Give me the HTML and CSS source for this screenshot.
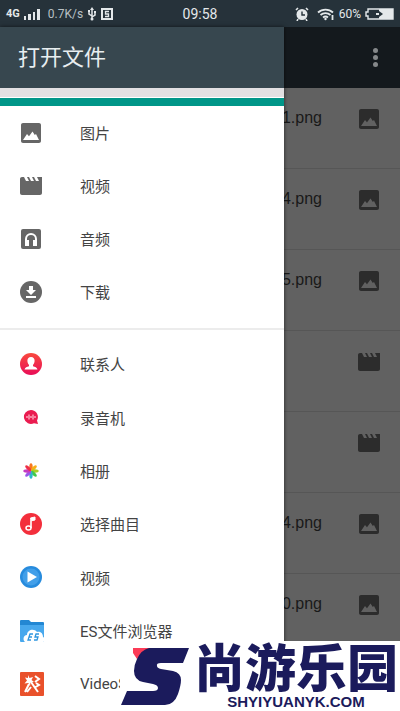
FILE: index.html
```html
<!DOCTYPE html>
<html lang="zh-CN">
<head>
    <meta charset="UTF-8">
    <meta name="viewport" content="width=device-width, initial-scale=1.0">
    <title>打开文件</title>
    <link rel="stylesheet" href="styles.css">
</head>
<body>
    <!-- Shared icons -->
    <svg class="sprite" width="0" height="0" aria-hidden="true">
        <symbol id="image" viewBox="0 0 24 24">
            <path d="M22 20V4c0-1.100-.9-2-2-2H4c-1.100 0-2 .9-2 2v16c0 1.100.9 2 2 2h16c1.100 0 2-.9 2-2zM4 19l4-6 2 2.200 3.500-4.700 2.300 3.500 1.200-1 3 6z"/>
        </symbol>
        <symbol id="movie" viewBox="0 0 24 24">
            <path d="M18 3l2 4h-3l-2-4h-2l2 4h-3l-2-4H8l2 4H7L5 3H3c-1.100 0-2 .9-2 2v14c0 1.100.9 2 2 2h18c1.100 0 2-.9 2-2V3z"/>
        </symbol>
    </svg>

    <header class="status-bar">
        <div class="status-group">
            <span class="network">4G</span>
            <svg width="16" height="12" viewBox="0 0 16 12" fill="currentColor"><path d="M0 8h2v4H0zM4 6h3v6H4zM9 4h2v8H9zM13 1h3v11h-3z"/></svg>
            <span class="speed">0.7K/s</span>
            <svg width="10" height="14" viewBox="0 0 10 14" fill="none" stroke="currentColor" stroke-width="1.500"><path d="M5 2v10M5 9L2 7V4M5 10l3-2V5"/><path d="M5 0l2 3H3zM1 3h2v2H1zM7 4h2v2H7z" fill="currentColor" stroke="none"/><circle cx="5" cy="12" r="1.500" fill="currentColor" stroke="none"/></svg>
            <svg width="12" height="12" viewBox="0 0 12 12" fill="none" stroke="currentColor"><rect x="1" y="1" width="10" height="10" stroke-width="2"/><path d="M8 3.500H4.500V6h3v2.500H4" stroke-width="1.300"/></svg>
        </div>
        <time class="clock">09:58</time>
        <div class="status-group status-right">
            <svg width="14" height="14" viewBox="0 0 14 14"><circle cx="7" cy="7.500" r="5.500" fill="currentColor"/><path d="M1 3l2-2M13 3l-2-2M3 12l-1 2M11 12l1 2" stroke="currentColor" stroke-width="1.600"/><path d="M7 4.500v3.500h3" fill="none" stroke="#26323a" stroke-width="1.400"/></svg>
            <svg class="wifi" width="18" height="14" viewBox="0 0 18 14" fill="none" stroke="currentColor" stroke-width="1.800"><path d="M1 5.500a11 11 0 0 1 15 0M3.500 8a7.500 7.500 0 0 1 10 0M6 10.500a4 4 0 0 1 5 0"/><circle cx="8.500" cy="12" r="1.200" fill="currentColor" stroke="none"/><path d="M15.500 8v5"/></svg>
            <span class="percent">60%</span>
            <svg width="29" height="12" viewBox="0 0 29 12"><path d="M3 1h25v10H3V8H1V4h2z" fill="none" stroke="currentColor" stroke-width="1.400"/><path d="M14 1h14v10H14z" fill="currentColor"/><path d="M11 6h3" stroke="currentColor" stroke-width="2"/><path d="M14 3l4 3-4 3z" fill="#26323a"/></svg>
        </div>
    </header>

    <div class="app">
        <main class="page">
            <div class="toolbar">
                <button class="more" type="button" aria-label="更多"><i></i><i></i><i></i></button>
            </div>
            <ul class="files">
                <li><span>1.png</span><svg class="icon"><use href="#image"/></svg></li>
                <li><span>4.png</span><svg class="icon"><use href="#image"/></svg></li>
                <li><span>5.png</span><svg class="icon"><use href="#image"/></svg></li>
                <li><svg class="icon"><use href="#movie"/></svg></li>
                <li><svg class="icon"><use href="#movie"/></svg></li>
                <li><span>4.png</span><svg class="icon"><use href="#image"/></svg></li>
                <li><span>0.png</span><svg class="icon"><use href="#image"/></svg></li>
            </ul>
        </main>

        <nav class="drawer">
            <h1>打开文件</h1>
            <div class="selected"></div>
            <ul class="menu">
                <li><a href="#"><svg class="icon"><use href="#image"/></svg>图片</a></li>
                <li><a href="#"><svg class="icon"><use href="#movie"/></svg>视频</a></li>
                <li><a href="#"><svg class="icon" viewBox="0 0 24 24"><rect x="2" y="2" width="20" height="20" rx="2"/><path d="M7 18v-6a5 5 0 0 1 10 0v6" fill="none" stroke="#fff" stroke-width="2"/><path d="M6 13h4v6H6zM14 13h4v6h-4z" fill="#fff"/></svg>音频</a></li>
                <li><a href="#"><svg class="icon" viewBox="0 0 24 24"><circle cx="12" cy="12" r="11"/><path d="M10 6h4v4h3l-5 5-5-5h3zM7 16h10v2H7z" fill="#fff"/></svg>下载</a></li>
            </ul>
            <ul class="menu apps">
                <li><a href="#"><svg class="icon" viewBox="0 0 24 24"><defs><linearGradient id="red" x2="0" y2="1"><stop stop-color="#f94a3e"/><stop offset="1" stop-color="#e80d58"/></linearGradient></defs><circle cx="12" cy="12" r="11" fill="url(#red)"/><path d="M12 5c-2.500 0-3.800 1.700-3.600 4 .1 2 .8 3 1.600 3.800v1.400c-2 .8-4 1-4.500 3.300h13c-.5-2.300-2.500-2.500-4.500-3.300v-1.400c.8-.8 1.500-1.800 1.600-3.800.2-2.300-1.100-4-3.600-4z" fill="#fff"/></svg>联系人</a></li>
                <li><a href="#"><svg class="icon" viewBox="0 0 24 24"><path d="M12 5a7 7 0 1 0 3 13.300l4 .7-1-3.500A7 7 0 0 0 12 5z" fill="#ea1c50"/><path d="M8 11v2M10 9.500v5M12 11v2M14 9.500v5M16 11v2" stroke="#ffc4d0" stroke-width="1.200"/></svg>录音机</a></li>
                <li><a href="#"><svg class="icon" viewBox="0 0 24 24">
                    <ellipse cx="12" cy="8" rx="1.700" ry="3.700" fill="#f8781f"/>
                    <ellipse cx="12" cy="8" rx="1.700" ry="3.700" fill="#f7ae17" transform="rotate(45 12 12)"/>
                    <ellipse cx="12" cy="8" rx="1.700" ry="3.700" fill="#a9cf24" transform="rotate(90 12 12)"/>
                    <ellipse cx="12" cy="8" rx="1.700" ry="3.700" fill="#42c94b" transform="rotate(135 12 12)"/>
                    <ellipse cx="12" cy="8" rx="1.700" ry="3.700" fill="#2db8ca" transform="rotate(180 12 12)"/>
                    <ellipse cx="12" cy="8" rx="1.700" ry="3.700" fill="#9957e8" transform="rotate(225 12 12)"/>
                    <ellipse cx="12" cy="8" rx="1.700" ry="3.700" fill="#c53ac0" transform="rotate(270 12 12)"/>
                    <ellipse cx="12" cy="8" rx="1.700" ry="3.700" fill="#ee3048" transform="rotate(315 12 12)"/>
                </svg>相册</a></li>
                <li><a href="#"><svg class="icon" viewBox="0 0 24 24"><circle cx="12" cy="12" r="11" fill="#f32f3c"/><path d="M11.500 6l4.500-1v3l-3.500.8" fill="#fff" stroke="#fff"/><ellipse cx="9.500" cy="16" rx="2.500" ry="2" fill="none" stroke="#fff" stroke-width="1.500"/><path d="M12 6v10" stroke="#fff" stroke-width="1.600"/></svg>选择曲目</a></li>
                <li><a href="#"><svg class="icon" viewBox="0 0 24 24"><circle cx="12" cy="12" r="11" fill="#278bdd"/><circle cx="12" cy="12" r="8.500" fill="#429fe9"/><path d="M8.500 6.500l9.500 5.500-9.500 5.500z" fill="#fff"/></svg>视频</a></li>
                <li><a href="#"><svg class="icon app-icon" viewBox="0 0 26 26"><path d="M1 3q0-1 1-1h8l2 2h12q1 0 1 1v4H1z" fill="#2387d3"/><path d="M1 7h24v16q0 1-1 1H2q-1 0-1-1z" fill="#48a8ed"/><path d="M6 24c-3-3-1-7 2-7 0-5 7-7 10-3 4-1 6 2 6 5 3 1 2 5 0 5z" fill="#fff"/><path d="M14 16h-3l-2 6h3M10 19h3M20 16h-3l-1 3h3l-1 3h-3" fill="none" stroke="#2f96df" stroke-width="1.300"/></svg>ES文件浏览器</a></li>
                <li><a href="#"><svg class="icon app-icon" viewBox="0 0 26 26"><rect x="1" y="1" width="24" height="24" rx="1" fill="#e9512b"/><path d="M9 4l1.500 3 3.500-1-1.500 3 2.500 2-3.500.5L11 15l-1.500-3-4 .5 2.500-3-2-3 3 .5z" fill="#fff"/><path d="M12 11l7 10M10 13l-4 8M16 5l4 3-4 3M12 16l-4 5M17 12l3 2-5 3" fill="none" stroke="#fff" stroke-width="2"/></svg>VideoS</a></li>
            </ul>
        </nav>
    </div>

    <footer class="brand">
        <svg class="brand-logo" width="69" height="58" viewBox="0 0 69 58">
            <path d="M12 0h17L16 11l-4-6z" fill="#fb3b57"/>
            <path d="M28 0h40l-6 15H40q-5 0-4 3 0 2 4 3l12 2q8 2 8 9 0 5-3 14-4 11-13 11H0l6-14h26q5 0 5-3 0-3-5-4l-10-2q-9-2-9-11 0-6 3-12 4-9 12-11z" fill="#1b1b5c"/>
        </svg>
        <div class="brand-text">
            <strong>尚游乐园</strong>
            <span>SHYIYUANYK.COM</span>
        </div>
    </footer>
</body>
</html>
```
FILE: styles.css
```css
* {
    box-sizing: border-box;
}

body {
    margin: 0;
    height: 100vh;
    display: flex;
    flex-direction: column;
    position: relative;
    overflow: hidden;
    background: #616161;
    font-family: Roboto, "Noto Sans CJK SC", sans-serif;
    font-size: 15px;
    color: #444;
}

ul {
    list-style: none;
    margin: 0;
    padding: 0;
}

svg {
    flex: none;
    display: block;
}

.sprite {
    position: absolute;
}

.icon {
    width: 24px;
    height: 24px;
    fill: #666;
}

.status-bar {
    flex: none;
    height: 27px;
    padding: 0 6px;
    display: grid;
    grid-template-columns: 1fr auto 1fr;
    align-items: center;
    background: #26323a;
    color: #e4e8ea;
    font-family: Roboto, sans-serif;
    font-size: 12px;
}

.status-group {
    display: flex;
    align-items: center;
    gap: 4px;
}

.status-right {
    justify-content: flex-end;
}

.network {
    font-size: 11px;
    font-weight: bold;
}

.speed {
    margin-left: 4px;
    color: #b8c0c4;
}

.clock {
    font-size: 14px;
}

.wifi {
    margin-left: 4px;
}

.app {
    flex: 1;
    position: relative;
}

/* File list behind the drawer */
.toolbar {
    height: 61px;
    padding-right: 14px;
    display: flex;
    align-items: center;
    justify-content: flex-end;
    background: #14191d;
}

.more {
    padding: 8px;
    display: grid;
    gap: 2px;
    border: 0;
    background: none;
}

.more i {
    width: 5px;
    height: 5px;
    border-radius: 50%;
    background: #85888a;
}

.files li {
    height: 81px;
    padding: 19px 19px 0 0;
    display: flex;
    justify-content: flex-end;
    gap: 35px;
    border-bottom: 1px solid #565656;
    font-family: "Liberation Sans", Arial, sans-serif;
    font-size: 16px;
    line-height: 22px;
    color: #191919;
}

.files .icon {
    fill: #2c2c2c;
}

/* Drawer */
.drawer {
    position: absolute;
    top: 0;
    bottom: 0;
    left: 0;
    width: 71%;
    display: flex;
    flex-direction: column;
    background: #fff;
    box-shadow: 0 0 4px rgba(0, 0, 0, 0.6);
}

.drawer h1 {
    margin: 0;
    padding-left: 18px;
    background: #37474f;
    color: #e8eef0;
    font-size: 22px;
    font-weight: 400;
    line-height: 61px;
}

.selected {
    height: 18px;
    border-top: 9px solid #e2e0e2;
    border-bottom: 8px solid #009688;
}

.menu {
    padding-bottom: 10px;
}

.menu li {
    height: 53px;
}

.menu a {
    height: 100%;
    padding-left: 19px;
    display: flex;
    align-items: center;
    gap: 37px;
    color: inherit;
    text-decoration: none;
}

.apps {
    flex: 1;
    display: flex;
    flex-direction: column;
    padding: 7px 0 0;
    border-top: 2px solid #ececec;
}

.apps li {
    flex: 1;
}

.app-icon {
    width: 26px;
    height: 26px;
    margin-right: -2px;
}

.brand {
    position: absolute;
    right: 0;
    bottom: 0;
    width: 70%;
    height: 70px;
    padding-left: 1px;
    display: flex;
    gap: 4px;
    background: #fff;
    color: #1b1b5c;
}

.brand-logo {
    margin-top: 7px;
}

.brand-text {
    display: flex;
    flex-direction: column;
    align-items: center;
    white-space: nowrap;
}

.brand-text strong {
    font-family: "Noto Sans CJK SC", sans-serif;
    font-size: 51px;
    font-weight: 900;
    line-height: 48px;
}

.brand-text span {
    font-family: "Liberation Sans", Arial, sans-serif;
    font-size: 15px;
    font-weight: bold;
    line-height: 26px;
}
```
